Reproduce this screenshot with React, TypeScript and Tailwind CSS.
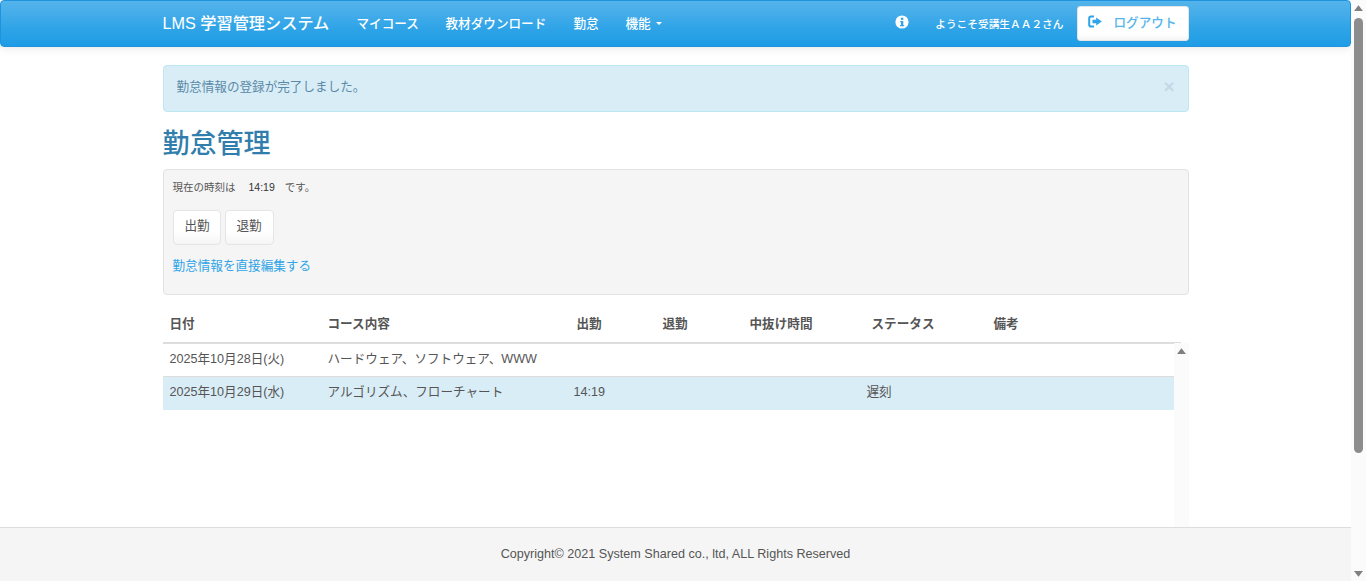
import React from "react";

const cols = ["w-[158px]", "w-[247px]", "w-[88px]", "w-[87px]", "w-[117px]", "w-[127px]", "flex-1"];

function Triangle({ down, className }: { down?: boolean; className?: string }) {
  return (
    <svg viewBox="0 0 10 7" className={className} fill="#808080">
      <path d={down ? "M0.3 0.6H9.7Q10 .6 9.7 1L5.3 6.7Q5 7 4.7 6.7L0.3 1Q0 .6 0.3 0.6Z" : "M4.7 0.3Q5 0 5.3 0.3L9.7 6Q10 6.4 9.7 6.4H0.3Q0 6.4 0.3 6Z"} />
    </svg>
  );
}

function HeadCell({ i, children, pl }: { i: number; children?: React.ReactNode; pl: string }) {
  return <div className={`${cols[i]} ${pl} shrink-0 pb-[2px] text-[12.6px] font-bold text-[#555]`}>{children}</div>;
}

function Cell({ i, children, pl }: { i: number; children?: React.ReactNode; pl: string }) {
  return <div className={`${cols[i]} ${pl} shrink-0 pb-[2px] text-[12.6px] text-[#555]`}>{children}</div>;
}

function Row({ c, highlight }: { c: string[]; highlight?: boolean }) {
  return (
    <div className={`flex h-[33px] items-center border-b border-[#ddd] ${highlight ? "bg-[#d9edf7] border-b-0" : ""}`}>
      <Cell i={0} pl="pl-[7px]">{c[0]}</Cell>
      <Cell i={1} pl="pl-[7px]">{c[1]}</Cell>
      <Cell i={2} pl="pl-[6px]">{c[2]}</Cell>
      <Cell i={3} pl="pl-[4px]">{c[3]}</Cell>
      <Cell i={4} pl="pl-[4px]">{c[4]}</Cell>
      <Cell i={5} pl="pl-[7px]">{c[5]}</Cell>
      <Cell i={6} pl="pl-[4px]">{c[6]}</Cell>
    </div>
  );
}

export default function App() {
  return (
    <div className="flex h-[581px] w-[1366px] overflow-hidden bg-white font-['Liberation_Sans','Noto_Sans_CJK_JP',sans-serif]">
      <div className="flex w-[1351px] shrink-0 flex-col">
        <nav className="h-[47px] shrink-0 rounded-[4px] border border-[#1f93dd] bg-gradient-to-b from-[#54b4eb] via-[#2fa4e7] via-60% to-[#1d9ce5] shadow-[0_1px_10px_rgba(0,0,0,0.1)]">
          <div className="mx-auto flex h-full w-[1026px] items-center text-white">
            <span className="w-[194px] shrink-0 text-[16.2px] font-medium">LMS 学習管理システム</span>
            <span className="mt-[1px] w-[89px] shrink-0 text-[12.6px] font-medium">マイコース</span>
            <span className="mt-[1px] w-[128px] shrink-0 text-[12.6px] font-medium">教材ダウンロード</span>
            <span className="mt-[1px] w-[52px] shrink-0 text-[12.6px] font-medium">勤怠</span>
            <span className="mt-[1px] flex shrink-0 items-center text-[12.6px] font-medium">
              機能
              <span className="ml-[5px] h-0 w-0 border-x-[3px] border-t-[3px] border-x-transparent border-t-white" />
            </span>
            <div className="ml-auto flex items-center">
              <svg viewBox="0 0 14 14" className="mb-[3px] h-[14px] w-[14px]">
                <circle cx="7" cy="7" r="6.6" fill="#fff" />
                <rect x="5.9" y="2.7" width="2.4" height="2.2" fill="#2fa4e7" />
                <path d="M5.2 6h3.1v4h0.9v1.3H5v-1.3h1V7.2H5.2Z" fill="#2fa4e7" />
              </svg>
              <span className="ml-[26px] mt-[2px] text-[10.7px] font-medium">ようこそ受講生ＡＡ２さん</span>
              <div className="ml-[13px] flex h-[35px] w-[112px] items-center rounded-[3px] border border-[#e5e5e5] bg-gradient-to-b from-white via-white via-80% to-[#f5f5f5] pl-[10px] text-[#54b4eb]">
                <svg viewBox="0 0 14 13" className="mb-[4px] h-[13px] w-[14px]" fill="#2fa4e7">
                  <path d="M6 0.5H3a2.8 2.8 0 0 0-2.8 2.8v6.4A2.8 2.8 0 0 0 3 12.5h3v-2H3.2a1 1 0 0 1-1-1V3.5a1 1 0 0 1 1-1H6Z" />
                  <path d="M4.5 4.7H8.2V2.6L13.8 6.5L8.2 10.4V8.3H4.5Z" />
                </svg>
                <span className="mb-[1px] ml-[12px] text-[12.6px] font-medium">ログアウト</span>
              </div>
            </div>
          </div>
        </nav>

        <main className="mx-auto flex min-h-0 w-[1026px] flex-1 flex-col pt-[18px]">
          <div className="flex h-[47px] shrink-0 items-center justify-between rounded-[4px] border border-[#bce8f1] bg-[#d9edf7] pl-[13px] pr-[13px] text-[#5b8aa8]">
            <span className="pb-[2px] text-[12.6px]">勤怠情報の登録が完了しました。</span>
            <span className="mb-[4px] text-[19px] font-bold leading-none text-[#c2d9e6]">×</span>
          </div>
          <h1 className="mt-[14px] h-[43px] shrink-0 text-[27px] font-medium leading-[36px] text-[#317eac]">勤怠管理</h1>
          <div className="h-[126px] shrink-0 rounded-[4px] border border-[#e3e3e3] bg-[#f5f5f5] pl-[9px] pt-[10px]">
            <div className="text-[10.5px] leading-[14px] text-[#555]">
              現在の時刻は<span className="ml-[13px] text-[#333]">14:19</span><span className="ml-[10px]">です。</span>
            </div>
            <div className="mt-[16px] flex gap-[4px]">
              <div className="flex h-[35px] w-[48px] items-center justify-center rounded-[4px] border border-[#e5e5e5] bg-gradient-to-b from-white via-white via-60% to-[#f5f5f5] pb-[3px] pl-[1px] text-[12.6px] text-[#555]">出勤</div>
              <div className="flex h-[35px] w-[49px] items-center justify-center rounded-[4px] border border-[#e5e5e5] bg-gradient-to-b from-white via-white via-60% to-[#f5f5f5] pb-[3px] text-[12.6px] text-[#555]">退勤</div>
            </div>
            <div className="mt-[13px] text-[12.6px] leading-[16px] text-[#2fa4e7]">勤怠情報を直接編集する</div>
          </div>

          <div className="mt-[13px] flex h-[36px] w-[1018px] shrink-0 items-center border-b-2 border-[#ddd]">
            <HeadCell i={0} pl="pl-[7px]">日付</HeadCell>
            <HeadCell i={1} pl="pl-[7px]">コース内容</HeadCell>
            <HeadCell i={2} pl="pl-[9px]">出勤</HeadCell>
            <HeadCell i={3} pl="pl-[7px]">退勤</HeadCell>
            <HeadCell i={4} pl="pl-[7px]">中抜け時間</HeadCell>
            <HeadCell i={5} pl="pl-[12px]">ステータス</HeadCell>
            <HeadCell i={6} pl="pl-[7px]">備考</HeadCell>
          </div>
          <div className="flex min-h-0 flex-1">
            <div className="w-[1011px] shrink-0">
              <Row c={["2025年10月28日(火)", "ハードウェア、ソフトウェア、WWW", "", "", "", "", ""]} />
              <Row highlight c={["2025年10月29日(水)", "アルゴリズム、フローチャート", "14:19", "", "", "遅刻", ""]} />
            </div>
            <div className="-mt-[1px] w-[15px] shrink-0 bg-[#fbfbfb] px-[3px] pt-[5px]">
              <Triangle className="block h-[7px] w-[9px]" />
            </div>
          </div>
        </main>

        <footer className="flex h-[54px] shrink-0 items-center justify-center border-t border-[#ddd] bg-[#f5f5f5] pb-[1px] text-[12.6px] text-[#555]">
          Copyright© 2021 System Shared co., ltd, ALL Rights Reserved
        </footer>
      </div>

      <div className="flex w-[15px] shrink-0 flex-col items-center bg-[#fbfbfb] pb-[4px] pt-[5px]">
        <Triangle className="h-[7px] w-[9px] shrink-0" />
        <div className="mt-[6px] h-[435px] w-[9px] shrink-0 rounded-[5px] bg-[#8c8c8c]" />
        <div className="flex-1" />
        <Triangle down className="h-[7px] w-[9px] shrink-0" />
      </div>
    </div>
  );
}
